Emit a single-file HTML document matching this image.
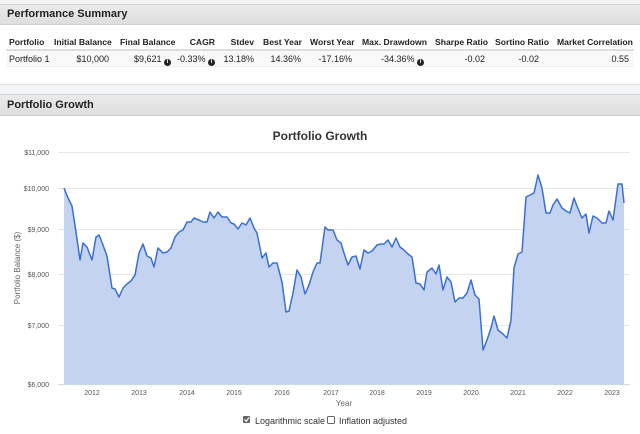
<!DOCTYPE html>
<html><head><style>
body{margin:0;width:640px;height:434px;background:#fff;font-family:"Liberation Sans",Arial,sans-serif;position:relative;overflow:hidden;color:#222}
.bar{position:absolute;left:0;width:640px;background:linear-gradient(#eaeaea,#dedede);border-top:1px solid #d2d2d2;border-bottom:1px solid #cfcfcf;font-weight:bold;font-size:11px;box-sizing:border-box;padding-left:7px}
.t{position:absolute;font-size:9px;white-space:nowrap}
.h{font-weight:bold;font-size:8.6px}
.r{text-align:right}
i{display:inline-block;width:7px;height:7px;border-radius:50%;background:#222;color:#fff;font-size:6px;line-height:7px;text-align:center;font-style:normal;font-weight:bold;vertical-align:-1px}
</style></head><body>
<div style="position:absolute;left:0;top:0;width:640px;height:4px;background:#f3f4f6"></div>
<div class="bar" style="top:4px;height:21px;line-height:19px">Performance Summary</div>
<div class="t h" style="left:9px;top:37px">Portfolio</div>
<div class="t h" style="left:54px;top:37px">Initial Balance</div>
<div class="t h" style="left:120px;top:37px">Final Balance</div>
<div class="t h r" style="right:425px;top:37px">CAGR</div>
<div class="t h r" style="right:386px;top:37px">Stdev</div>
<div class="t h" style="left:263px;top:37px">Best Year</div>
<div class="t h" style="left:310px;top:37px">Worst Year</div>
<div class="t h" style="left:362px;top:37px">Max. Drawdown</div>
<div class="t h" style="left:435px;top:37px">Sharpe Ratio</div>
<div class="t h" style="left:495px;top:37px">Sortino Ratio</div>
<div class="t h" style="left:557px;top:37px">Market Correlation</div>
<div style="position:absolute;left:6px;top:49px;width:628px;height:2px;background:#ddd"></div>
<div style="position:absolute;left:6px;top:51px;width:628px;height:15px;background:#f9f9f9;border-bottom:1px solid #eee"></div>
<div class="t" style="left:9px;top:54px">Portfolio 1</div>
<div class="t r" style="right:531px;top:54px">$10,000</div>
<div class="t r" style="right:469px;top:54px">$9,621 <i>i</i></div>
<div class="t r" style="right:425px;top:54px">-0.33% <i>i</i></div>
<div class="t r" style="right:386px;top:54px">13.18%</div>
<div class="t r" style="right:339px;top:54px">14.36%</div>
<div class="t r" style="right:288px;top:54px">-17.16%</div>
<div class="t r" style="right:216px;top:54px">-34.36% <i>i</i></div>
<div class="t r" style="right:155px;top:54px">-0.02</div>
<div class="t r" style="right:101px;top:54px">-0.02</div>
<div class="t r" style="right:11px;top:54px">0.55</div>
<div style="position:absolute;left:0;top:84px;width:640px;height:11px;background:#f3f4f6;border-top:1px solid #e4e4e4"></div>
<div class="bar" style="top:94px;height:22px;line-height:20px">Portfolio Growth</div>
<svg style="position:absolute;left:0;top:0" width="640" height="434" font-family="Liberation Sans,Arial,sans-serif">
<text x="320" y="140" text-anchor="middle" font-size="12" font-weight="bold" fill="#333">Portfolio Growth</text>
<g stroke="#e6e6e6" stroke-width="1">
<line x1="58" y1="152.5" x2="630" y2="152.5"/><line x1="58" y1="188.5" x2="630" y2="188.5"/><line x1="58" y1="229.5" x2="630" y2="229.5"/><line x1="58" y1="274.5" x2="630" y2="274.5"/><line x1="58" y1="325.5" x2="630" y2="325.5"/><line x1="58" y1="384.5" x2="630" y2="384.5" stroke="#ccd6eb"/>
</g>
<g font-size="7" fill="#555" text-anchor="end">
<text x="49" y="155">$11,000</text><text x="49" y="191">$10,000</text><text x="49" y="232">$9,000</text><text x="49" y="277">$8,000</text><text x="49" y="328">$7,000</text><text x="49" y="387">$6,000</text>
</g>
<text transform="translate(20,268) rotate(-90)" text-anchor="middle" font-size="8" fill="#666">Portfolio Balance ($)</text>
<polygon fill="#c3d3f0" points="64,384 64,188 68,198 72,206 76,232 80,260 83,243 87,247 92,260 96,237 99,235 103,245 107,256 112,288 115,289 119,297 123,288 127,284 131,281 135,275 139,253 143,244 147,256 151,258 154,267 158,248 163,253 167,252 171,248 175,237 179,232 183,230 187,222 191,222 194,218 199,220 203,222 207,222 210,212 214,218 218,212 222,217 227,217 231,223 234,224 238,229 242,223 246,225 250,218 254,228 257,233 262,258 266,253 269,267 273,263 277,263 282,282 286,312 289,311 293,293 297,270 301,277 305,294 309,285 313,272 317,263 320,263 325,227 328,230 333,230 337,240 341,243 344,253 348,265 352,257 356,256 360,269 364,250 368,253 372,251 377,245 381,244 384,244 388,240 392,247 396,238 400,247 404,250 408,254 412,257 416,283 420,284 424,290 427,272 432,268 436,274 439,265 443,290 447,277 451,282 455,302 459,298 463,298 467,293 471,280 475,295 479,299 483,350 487,340 491,328 494,316 498,330 503,334 507,338 511,320 514,268 518,254 522,252 526,197 530,195 534,193 538,175 542,188 546,213 550,213 553,205 557,199 562,208 566,211 570,213 574,198 577,206 582,218 586,214 589,233 593,216 597,218 602,223 606,223 609,211 613,220 618,184 622,184 624,203 624,384"/>
<polyline fill="none" stroke="#3a6fd4" stroke-width="1.5" stroke-linejoin="round" points="64,188 68,198 72,206 76,232 80,260 83,243 87,247 92,260 96,237 99,235 103,245 107,256 112,288 115,289 119,297 123,288 127,284 131,281 135,275 139,253 143,244 147,256 151,258 154,267 158,248 163,253 167,252 171,248 175,237 179,232 183,230 187,222 191,222 194,218 199,220 203,222 207,222 210,212 214,218 218,212 222,217 227,217 231,223 234,224 238,229 242,223 246,225 250,218 254,228 257,233 262,258 266,253 269,267 273,263 277,263 282,282 286,312 289,311 293,293 297,270 301,277 305,294 309,285 313,272 317,263 320,263 325,227 328,230 333,230 337,240 341,243 344,253 348,265 352,257 356,256 360,269 364,250 368,253 372,251 377,245 381,244 384,244 388,240 392,247 396,238 400,247 404,250 408,254 412,257 416,283 420,284 424,290 427,272 432,268 436,274 439,265 443,290 447,277 451,282 455,302 459,298 463,298 467,293 471,280 475,295 479,299 483,350 487,340 491,328 494,316 498,330 503,334 507,338 511,320 514,268 518,254 522,252 526,197 530,195 534,193 538,175 542,188 546,213 550,213 553,205 557,199 562,208 566,211 570,213 574,198 577,206 582,218 586,214 589,233 593,216 597,218 602,223 606,223 609,211 613,220 618,184 622,184 624,203"/>
<g font-size="7" fill="#555" text-anchor="middle">
<text x="92" y="395">2012</text><text x="139" y="395">2013</text><text x="187" y="395">2014</text><text x="234" y="395">2015</text><text x="282" y="395">2016</text><text x="331" y="395">2017</text><text x="377" y="395">2018</text><text x="424" y="395">2019</text><text x="471" y="395">2020</text><text x="518" y="395">2021</text><text x="565" y="395">2022</text><text x="612" y="395">2023</text>
<text x="344" y="406" font-size="8" fill="#666">Year</text>
</g>
<rect x="243" y="416" width="7" height="7" fill="#666" rx="1"/>
<path d="M244.5 419.5 L246.3 421.3 L249 417.5" stroke="#fff" stroke-width="1.2" fill="none"/>
<text x="255" y="424" font-size="9" fill="#333">Logarithmic scale</text>
<rect x="327.5" y="416.5" width="7" height="7" fill="#fff" stroke="#666" rx="1"/>
<text x="339" y="424" font-size="9" fill="#333">Inflation adjusted</text>
</svg>
</body></html>
